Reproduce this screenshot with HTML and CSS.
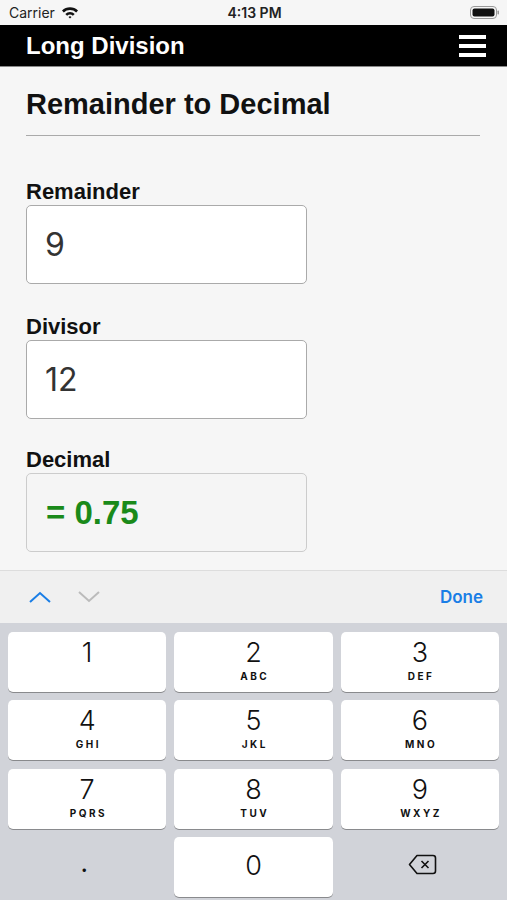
FILE: index.html
```html
<!DOCTYPE html>
<html>
	<head>
		<meta charset="UTF-8">
		<title>Long Division</title>
		<link rel="stylesheet" href="styles.css">
	</head>
	<body>
		<div class="status">
			<div class="status-left">
				Carrier
				<svg class="wifi" width="18" height="13" viewBox="0 0 18 13">
					<path d="M1 4.6 A11.5 11.5 0 0 1 17 4.6 L15.2 6.4 A9 9 0 0 0 2.8 6.4 Z" fill="#111"/>
					<path d="M4.3 7.9 A6.8 6.8 0 0 1 13.7 7.9 L11.9 9.7 A4.3 4.3 0 0 0 6.1 9.7 Z" fill="#111"/>
					<path d="M7.5 11 A2.2 2.2 0 0 1 10.5 11 L9 12.6 Z" fill="#111"/>
				</svg>
			</div>
			<div class="status-time">4:13 PM</div>
			<div class="status-right">
				<svg width="30" height="13" viewBox="0 0 30 13">
					<rect x="0.5" y="0.5" width="26" height="12" rx="3.5" fill="none" stroke="#999"/>
					<rect x="2.5" y="2.5" width="22" height="8" rx="2" fill="#111"/>
					<rect x="27.5" y="4.5" width="1.5" height="4" rx="0.7" fill="#999"/>
				</svg>
			</div>
		</div>

		<div class="navbar">
			<span class="nav-title">Long Division</span>
			<div class="menu">
				<span></span><span></span><span></span>
			</div>
		</div>

		<div class="content">
			<h1 class="page-title">Remainder to Decimal</h1>
			<div class="field">
				<label class="field-label">Remainder</label>
				<div class="field-box">9</div>
			</div>
			<div class="field">
				<label class="field-label">Divisor</label>
				<div class="field-box">12</div>
			</div>
			<div class="field">
				<label class="field-label">Decimal</label>
				<div class="field-box result">= 0.75</div>
			</div>
		</div>

		<div class="keyboard">
			<div class="toolbar">
				<div class="arrows">
					<svg width="24" height="14" viewBox="0 0 24 14"><path d="M2 12 L12 3 L22 12" fill="none" stroke="#1a7ee6" stroke-width="2"/></svg>
					<svg width="24" height="14" viewBox="0 0 24 14"><path d="M2 2 L12 11 L22 2" fill="none" stroke="#bbb" stroke-width="2"/></svg>
				</div>
				<span class="done">Done</span>
			</div>
			<div class="keys">
				<div class="key"><span class="num">1</span><span class="sub"></span></div>
				<div class="key"><span class="num">2</span><span class="sub">ABC</span></div>
				<div class="key"><span class="num">3</span><span class="sub">DEF</span></div>
				<div class="key"><span class="num">4</span><span class="sub">GHI</span></div>
				<div class="key"><span class="num">5</span><span class="sub">JKL</span></div>
				<div class="key"><span class="num">6</span><span class="sub">MNO</span></div>
				<div class="key"><span class="num">7</span><span class="sub">PQRS</span></div>
				<div class="key"><span class="num">8</span><span class="sub">TUV</span></div>
				<div class="key"><span class="num">9</span><span class="sub">WXYZ</span></div>
				<div class="key plain"><span class="dot">.</span></div>
				<div class="key"><span class="num zero">0</span></div>
				<div class="key plain">
					<svg class="backspace" width="29" height="21" viewBox="0 0 29 21">
						<path d="M9 1.5 H25 A2.5 2.5 0 0 1 27.5 4 V17 A2.5 2.5 0 0 1 25 19.5 H9 L1.5 10.5 Z" fill="none" stroke="#111" stroke-width="1.6" stroke-linejoin="round"/>
						<path d="M13.5 7 L20.5 14 M20.5 7 L13.5 14" stroke="#111" stroke-width="1.6"/>
					</svg>
				</div>
			</div>
		</div>
	</body>
</html>
```

FILE: styles.css
```css
*{
	margin: 0;
	padding: 0;
	box-sizing: border-box;
}
body{
	width: 507px;
	height: 900px;
	background: #f6f6f6;
	font-family: "Liberation Sans", Arial, sans-serif;
	overflow: hidden;
	display: flex;
	flex-direction: column;
}
.status{
	flex-shrink: 0;
	height: 25px;
	display: flex;
	align-items: center;
	justify-content: space-between;
	padding: 0 7px 0 9px;
	font-family: Inter, "Liberation Sans", sans-serif;
	font-size: 14px;
	color: #222;
}
.status-left{
	display: flex;
	align-items: center;
	gap: 6px;
	width: 120px;
}
.status-time{
	font-weight: 600;
}
.status-right{
	width: 120px;
	display: flex;
	justify-content: flex-end;
}
.navbar{
	flex-shrink: 0;
	height: 42px;
	background: #000;
	border-bottom: 1px solid #888;
	display: flex;
	align-items: center;
	justify-content: space-between;
	padding: 0 21px 0 26px;
}
.nav-title{
	color: #fff;
	font-size: 24px;
	font-weight: bold;
}
.menu{
	display: flex;
	flex-direction: column;
	gap: 5px;
	width: 27px;
}
.menu span{
	height: 4px;
	background: #fff;
}
.content{
	flex: 1;
	min-height: 0;
	padding: 0 27px 0 26px;
}
.page-title{
	font-size: 29px;
	line-height: 33px;
	font-weight: bold;
	color: #111;
	padding: 21px 0 14px;
	border-bottom: 1px solid #aaa;
	margin-bottom: 43px;
}
.field{
	margin-bottom: 30px;
}
.field:nth-child(3){
	margin-bottom: 28px;
}
.field-label{
	display: block;
	font-size: 22px;
	line-height: 25px;
	font-weight: bold;
	color: #111;
	margin-bottom: 1px;
}
.field-box{
	width: 281px;
	height: 79px;
	background: #fff;
	border: 1px solid #aaa;
	border-radius: 5px;
	display: flex;
	align-items: center;
	padding-left: 18px;
	font-family: Inter, "Liberation Sans", sans-serif;
	font-size: 32px;
	color: #333;
}
.field-box.result{
	background: #f5f5f5;
	border-color: #ccc;
	color: #1a8a1a;
	font-family: "Liberation Sans", Arial, sans-serif;
	font-weight: bold;
	font-size: 33px;
	padding-left: 19px;
}
.keyboard{
	flex-shrink: 0;
	height: 330px;
	display: flex;
	flex-direction: column;
}
.toolbar{
	height: 53px;
	background: #f0f0f0;
	border-top: 1px solid #ddd;
	display: flex;
	align-items: center;
	justify-content: space-between;
	padding: 0 24px 0 28px;
}
.arrows{
	display: flex;
	gap: 25px;
}
.done{
	font-family: Inter, "Liberation Sans", sans-serif;
	font-size: 17px;
	font-weight: 600;
	color: #1a7ee6;
}
.keys{
	flex: 1;
	background: #d1d3d9;
	display: grid;
	grid-template-columns: repeat(3, 1fr);
	grid-auto-rows: 60px;
	column-gap: 8px;
	row-gap: 8.4px;
	padding: 9px 8px 0;
}
.key{
	background: #fff;
	border-radius: 5px;
	box-shadow: 0 1px 0 #898a8d;
	display: flex;
	flex-direction: column;
	align-items: center;
	padding-top: 5px;
	font-family: Inter, "Liberation Sans", sans-serif;
	color: #111;
}
.key.plain{
	background: transparent;
	box-shadow: none;
	justify-content: center;
	padding-top: 0;
}
.num{
	font-size: 27px;
	font-weight: 300;
	line-height: 32px;
}
.num.zero{
	line-height: 48px;
}
.sub{
	font-size: 10px;
	font-weight: 700;
	letter-spacing: 2.5px;
	margin-right: -2.5px;
	line-height: 14px;
}
.dot{
	font-size: 26px;
	line-height: 20px;
	margin-top: -8px;
	margin-right: 6px;
}
.backspace{
	margin-left: 5px;
	margin-bottom: 6px;
}
```
